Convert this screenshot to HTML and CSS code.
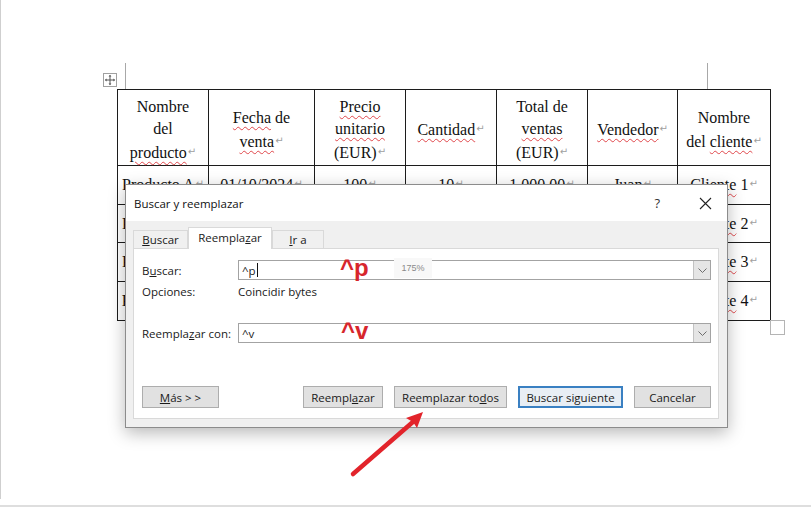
FILE: index.html
```html
<!DOCTYPE html>
<html lang="es">
<head>
<meta charset="utf-8">
<title>Buscar y reemplazar</title>
<link rel="stylesheet" href="styles.css">
</head>
<body>
<div class="screen">
  <div class="page">
    <div class="marks">
      <div class="handle">
        <svg width="12" height="12" viewBox="0 0 12 12">
          <path d="M6 1.5V10.5M1.5 6H10.5" stroke="#555" stroke-width="1" fill="none"/>
          <path d="M6 0.8L4.6 2.6H7.4Z M6 11.2L4.6 9.4H7.4Z M0.8 6L2.6 4.6V7.4Z M11.2 6L9.4 4.6V7.4Z" fill="#555"/>
        </svg>
      </div>
      <div class="corner corner-left"></div>
      <div class="corner corner-right"></div>
    </div>
    <div class="table-wrap">
      <table class="sheet">
        <colgroup>
          <col class="c1"><col class="c2"><col class="c3"><col class="c4"><col class="c5"><col class="c6"><col class="c7">
        </colgroup>
        <tr class="head">
          <td>Nombre<br>del<br><span class="sp">producto</span><i class="pm">↵</i></td>
          <td><span class="sp">Fecha</span> de<br><span class="sp">venta</span><i class="pm">↵</i></td>
          <td><span class="sp">Precio</span><br><span class="sp">unitario</span><br>(EUR)<i class="pm">↵</i></td>
          <td><span class="sp">Cantidad</span><i class="pm">↵</i></td>
          <td>Total de<br><span class="sp">ventas</span><br>(EUR)<i class="pm">↵</i></td>
          <td><span class="sp">Vendedor</span><i class="pm">↵</i></td>
          <td>Nombre<br>del <span class="sp">cliente</span><i class="pm">↵</i></td>
        </tr>
        <tr class="r1">
          <td>Producto A<i class="pm">↵</i></td>
          <td>01/10/2024<i class="pm">↵</i></td>
          <td>100<i class="pm">↵</i></td>
          <td>10<i class="pm">↵</i></td>
          <td>1.000,00<i class="pm">↵</i></td>
          <td>Juan<i class="pm">↵</i></td>
          <td><span class="sp">Cliente</span> 1<i class="pm">↵</i></td>
        </tr>
        <tr class="r2">
          <td>Producto B<i class="pm">↵</i></td>
          <td>02/10/2024<i class="pm">↵</i></td>
          <td>150<i class="pm">↵</i></td>
          <td>5<i class="pm">↵</i></td>
          <td>750,00<i class="pm">↵</i></td>
          <td>María<i class="pm">↵</i></td>
          <td><span class="sp">Cliente</span> 2<i class="pm">↵</i></td>
        </tr>
        <tr class="r3">
          <td>Producto C<i class="pm">↵</i></td>
          <td>03/10/2024<i class="pm">↵</i></td>
          <td>200<i class="pm">↵</i></td>
          <td>8<i class="pm">↵</i></td>
          <td>1.600,00<i class="pm">↵</i></td>
          <td>Pedro<i class="pm">↵</i></td>
          <td><span class="sp">Cliente</span> 3<i class="pm">↵</i></td>
        </tr>
        <tr class="r4">
          <td>Producto D<i class="pm">↵</i></td>
          <td>04/10/2024<i class="pm">↵</i></td>
          <td>120<i class="pm">↵</i></td>
          <td>12<i class="pm">↵</i></td>
          <td>1.440,00<i class="pm">↵</i></td>
          <td>Ana<i class="pm">↵</i></td>
          <td><span class="sp">Cliente</span> 4<i class="pm">↵</i></td>
        </tr>
      </table>
      <div class="end-mark"></div>
    </div>
  </div>
  <div class="bottom-rule"></div>

  <div class="dialog">
    <div class="titlebar">
      <span class="title">Buscar y reemplazar</span>
      <span class="help">?</span>
      <span class="close">
        <svg width="13" height="13" viewBox="0 0 13 13"><path d="M1 1L12 12M12 1L1 12" stroke="#222" stroke-width="1.1" fill="none"/></svg>
      </span>
    </div>
    <div class="dlg-body">
      <div class="tabs">
        <div class="tab"><u>B</u>uscar</div>
        <div class="tab active">Reempla<u>z</u>ar</div>
        <div class="tab"><u>I</u>r a</div>
      </div>
      <div class="panel">
        <div class="field">
          <span class="lbl">B<u>u</u>scar:</span>
          <div class="combo">
            <span class="val">^p<span class="cursor"></span></span>
            <span class="drop"><svg width="9" height="5" viewBox="0 0 9 5"><path d="M0.5 0.5L4.5 4.5L8.5 0.5" stroke="#6d6d6d" stroke-width="1" fill="none"/></svg></span>
          </div>
        </div>
        <div class="options">
          <span class="lbl">Opciones:</span>
          <span>Coincidir bytes</span>
        </div>
        <div class="field field-replace">
          <span class="lbl">Reempla<u>z</u>ar con:</span>
          <div class="combo">
            <span class="val">^v</span>
            <span class="drop"><svg width="9" height="5" viewBox="0 0 9 5"><path d="M0.5 0.5L4.5 4.5L8.5 0.5" stroke="#6d6d6d" stroke-width="1" fill="none"/></svg></span>
          </div>
        </div>
        <div class="buttons">
          <button class="btn btn-more"><u>M</u>ás &gt; &gt;</button>
          <div class="btn-group">
            <button class="btn btn-rep">Reempl<u>a</u>zar</button>
            <button class="btn btn-all">Reemplazar to<u>d</u>os</button>
            <button class="btn btn-next focus">Buscar si<u>g</u>uiente</button>
            <button class="btn btn-cancel">Cancelar</button>
          </div>
        </div>
      </div>
    </div>
  </div>

  <div class="note note-p">^p</div>
  <div class="zoom-chip">175%</div>
  <div class="note note-v">^v</div>

  <svg class="arrow" width="811" height="507" viewBox="0 0 811 507">
    <line x1="353" y1="474" x2="414" y2="421" stroke="#e2242b" stroke-width="4.5" stroke-linecap="round"/>
    <path d="M423 412 L417 428 L413 422 L406 418 Z" fill="#e2242b"/>
  </svg>
</div>
</body>
</html>
```

FILE: styles.css
```css
* { box-sizing: border-box; }

html, body {
  margin: 0;
  padding: 0;
  background: #fff;
}

.screen {
  position: relative;
  width: 811px;
  height: 507px;
  overflow: hidden;
  background: #fff;
}

.page {
  height: 499px;
  border-left: 1px solid #cfcfcf;
  padding-top: 63px;
}

.bottom-rule {
  margin-top: 6px;
  height: 2px;
  background: #dedede;
}

/* corner marks + table handle */
.marks {
  display: flex;
  height: 26px;
}

.handle {
  margin-left: 102px;
  margin-top: 10px;
  width: 14px;
  height: 14px;
  border: 1px solid #a0a0a0;
  background: #fff;
  display: flex;
  align-items: center;
  justify-content: center;
}

.corner {
  width: 1px;
  height: 26px;
  background: #a8a8a8;
}

.corner-left { margin-left: 8px; }
.corner-right { margin-left: 581px; }

/* the document table */
.table-wrap {
  display: flex;
  align-items: flex-end;
  margin-left: 116px;
}

.sheet {
  border-collapse: collapse;
  table-layout: fixed;
  width: 653px;
  font-family: "Liberation Serif", "Times New Roman", serif;
  font-size: 16px;
  line-height: 22.5px;
  color: #111;
}

.sheet td {
  border: 1px solid #1c1c1c;
  text-align: center;
  vertical-align: middle;
  padding: 0 2px;
  white-space: nowrap;
}

.c1 { width: 91px; }
.c2 { width: 106px; }
.c3 { width: 91px; }
.c4 { width: 91px; }
.c5 { width: 91px; }
.c6 { width: 90px; }
.c7 { width: 93px; }

.head td {
  height: 76px;
  padding-top: 5px;
}
.r1 td { height: 39px; }
.r2 td { height: 38px; }
.r3 td { height: 39px; }
.r4 td { height: 39px; }

.sp {
  text-decoration: underline wavy #e0474b;
  text-decoration-thickness: 1px;
  text-underline-offset: 3px;
}

.pm {
  font-style: normal;
  font-family: "DejaVu Sans", sans-serif;
  font-size: 10px;
  color: #a0a0a0;
  vertical-align: 3px;
  margin-left: 1px;
}

.end-mark {
  width: 15px;
  height: 15px;
  border: 1px solid #b4b4b4;
  margin-left: -1px;
  margin-bottom: -14px;
  background: #fff;
}

/* dialog */
.dialog {
  position: absolute;
  left: 125px;
  top: 184px;
  width: 603px;
  height: 244px;
  border: 1px solid #8c8c8c;
  background: #f0f0f0;
  box-shadow: 0 5px 16px rgba(0, 0, 0, 0.28);
  font-family: "Open Sans", "Noto Sans", sans-serif;
  font-size: 11.5px;
  color: #1a1a1a;
  display: flex;
  flex-direction: column;
}

.titlebar {
  height: 36px;
  background: #fff;
  display: flex;
  align-items: center;
  padding: 0 15px 0 8px;
}

.title {
  flex: 1;
  font-size: 11.5px;
  color: #111;
}

.help {
  font-size: 13px;
  color: #333;
  margin-right: 39px;
}

.close {
  display: flex;
  margin-top: 1px;
}

.dlg-body {
  flex: 1;
  padding: 7px 8px 8px 7px;
  display: flex;
  flex-direction: column;
}

.tabs {
  display: flex;
  align-items: flex-end;
  height: 20px;
  position: relative;
  z-index: 1;
}

.tab {
  height: 18px;
  border: 1px solid #d9d9d9;
  border-bottom: none;
  background: #f0f0f0;
  display: flex;
  align-items: center;
  justify-content: center;
}

.tab:first-child { width: 55px; }
.tab.active {
  width: 84px;
  background: #fff;
  margin-bottom: -1px;
  height: 22px;
  padding-bottom: 2px;
}
.tab:last-child { width: 52px; }

.panel {
  flex: 1;
  background: #fff;
  border: 1px solid #d9d9d9;
  padding: 11px 7px 10px 8px;
  display: flex;
  flex-direction: column;
}

.field {
  display: flex;
  align-items: center;
  height: 20px;
}

.lbl {
  width: 96px;
  flex: none;
}

.combo {
  flex: 1;
  height: 20px;
  border: 1px solid #a3a3a3;
  background: #fff;
  display: flex;
  align-items: center;
  padding-left: 3px;
}

.val {
  flex: 1;
  display: flex;
  align-items: center;
  font-size: 11.5px;
}

.cursor {
  display: inline-block;
  width: 1px;
  height: 14px;
  background: #111;
  margin-left: 1px;
}

.drop {
  width: 17px;
  height: 18px;
  background: #e5e5e5;
  border-left: 1px solid #c2c2c2;
  display: flex;
  align-items: center;
  justify-content: center;
}

.options {
  display: flex;
  align-items: center;
  height: 14px;
  margin-top: 4px;
}

.field-replace { margin-top: 25px; }

.buttons {
  display: flex;
  justify-content: space-between;
  margin-top: 43px;
}

.btn-group {
  display: flex;
  gap: 11px;
}

.btn {
  height: 22px;
  padding: 0;
  border: 1px solid #adadad;
  background: #e1e1e1;
  font-family: "Open Sans", "Noto Sans", sans-serif;
  font-size: 11.5px;
  color: #1a1a1a;
}

.btn-more { width: 77px; }
.btn-rep { width: 80px; }
.btn-all { width: 113px; }
.btn-next { width: 105px; }
.btn-cancel { width: 77px; }

.btn.focus {
  border: 2px solid #3a80c2;
  background: #e8eef4;
}

/* annotations over the screenshot */
.note {
  position: absolute;
  font-family: "Liberation Sans", Arial, sans-serif;
  font-weight: bold;
  font-size: 24px;
  line-height: 24px;
  color: #d7262c;
}

.note-p { left: 340px; top: 256px; }
.note-v { left: 341px; top: 319px; }

.zoom-chip {
  position: absolute;
  left: 394px;
  top: 258px;
  width: 38px;
  height: 20px;
  background: #f8f8f8;
  color: #8a8a8a;
  font-family: "Liberation Sans", Arial, sans-serif;
  font-size: 9px;
  display: flex;
  align-items: center;
  justify-content: center;
}

.arrow {
  position: absolute;
  left: 0;
  top: 0;
}
```
